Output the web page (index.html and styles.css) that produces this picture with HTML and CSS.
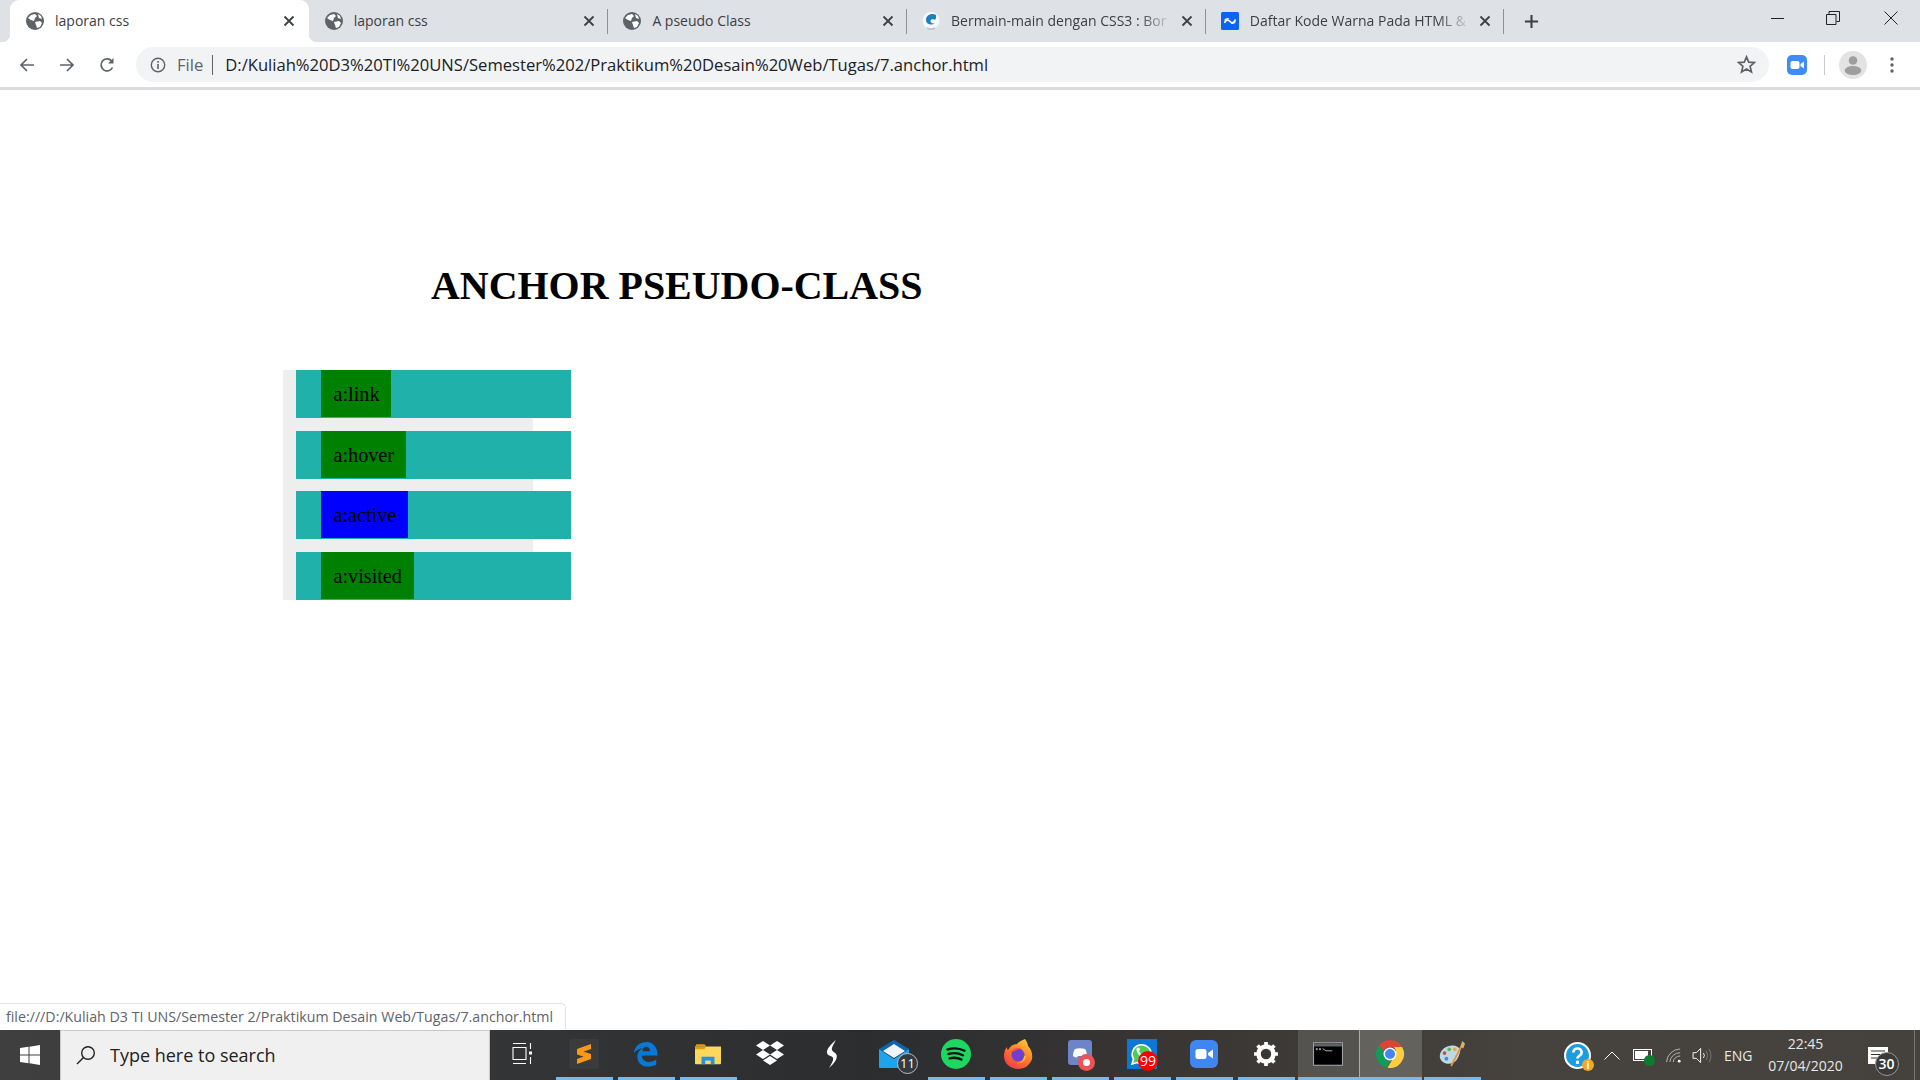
FILE: index.html
```html
<!DOCTYPE html>
<html lang="en">
<head>
<meta charset="utf-8">
<title>Anchor pseudo-class</title>
<link rel="stylesheet" href="styles.css">
</head>
<body>
<svg class="defs" width="0" height="0" aria-hidden="true">
  <defs>
    <linearGradient id="fox" x1="0.8" y1="0" x2="0.2" y2="1">
      <stop offset="0" stop-color="#ffc933"/>
      <stop offset="0.5" stop-color="#fb7c2a"/>
      <stop offset="1" stop-color="#f2384a"/>
    </linearGradient>
  </defs>
  <symbol id="globe" viewBox="0 0 18 18">
    <circle cx="9" cy="9" r="9" fill="#5f6368"/>
    <path d="M2 6l3-3 4-1 2 2-2 2-1 3-3-1zM9 10l5-1 2 2-2 4-3 1-1-3zM12 2l3 2 1 3-3-1z" fill="#fff"/>
  </symbol>
  <symbol id="cross" viewBox="0 0 12 12">
    <path d="M1.5 1.5l9 9M10.5 1.5l-9 9" stroke="#3c4043" stroke-width="1.8" fill="none"/>
  </symbol>
</svg>

<header class="tabstrip">
  <div class="tab tab-active">
    <svg class="favicon"><use href="#globe"/></svg>
    <span class="tab-title">laporan css</span>
    <svg class="tab-close"><use href="#cross"/></svg>
  </div>
  <div class="tab">
    <svg class="favicon"><use href="#globe"/></svg>
    <span class="tab-title">laporan css</span>
    <svg class="tab-close"><use href="#cross"/></svg>
    <i class="tab-sep"></i>
  </div>
  <div class="tab">
    <svg class="favicon"><use href="#globe"/></svg>
    <span class="tab-title">A pseudo Class</span>
    <svg class="tab-close"><use href="#cross"/></svg>
    <i class="tab-sep"></i>
  </div>
  <div class="tab">
    <svg class="favicon" viewBox="0 0 18 18">
      <circle cx="9" cy="8.500" r="8.500" fill="#f6f8fa"/>
      <path d="M14 3C9.500 .5 3.500 3.500 4 8.500c.4 3.500 5 5.500 9 3-2 .3-4.500-.3-4.500-2.500 0-1.800 2.500-2 3.800-1.300 1.200.4 2.200-1.500 1.700-4.700z" fill="#1c7fc0"/>
      <path d="M5 16c2.500 1.300 6 1.300 8 0" stroke="#b9c6d0" stroke-width="1.600" fill="none"/>
    </svg>
    <span class="tab-title tab-title-fade">Bermain-main dengan CSS3 : Bor</span>
    <svg class="tab-close"><use href="#cross"/></svg>
    <i class="tab-sep"></i>
  </div>
  <div class="tab">
    <svg class="favicon" viewBox="0 0 18 18">
      <rect width="18" height="18" rx="1.500" fill="#0d62f2"/>
      <path d="M3.500 11C5 7.500 7 7.500 9 9.500s4 1.500 5.500-2" stroke="#fff" stroke-width="1.700" fill="none"/>
      <path d="M3.500 8.500C5 6.500 6.500 6.300 8 7M10 11c1.500.8 3.200.3 4.500-1.500" stroke="#fff" stroke-width="1.200" fill="none"/>
    </svg>
    <span class="tab-title tab-title-fade">Daftar Kode Warna Pada HTML &amp;</span>
    <svg class="tab-close"><use href="#cross"/></svg>
    <i class="tab-sep"></i>
  </div>
  <svg class="newtab" viewBox="0 0 16 16"><path d="M8 1v14M1 8h14" stroke="#3c4043" stroke-width="2.200"/></svg>
  <div class="winctl">
    <svg class="winbtn" viewBox="0 0 14 14"><path d="M0 7.500h13" stroke="#222" stroke-width="1"/></svg>
    <svg class="winbtn" viewBox="0 0 14 14"><path d="M.5 3.500h9.500v10h-9.500zM3 3.500v-3h10.500v10h-3" stroke="#222" fill="none"/></svg>
    <svg class="winbtn winbtn-close" viewBox="0 0 14 14"><path d="M.5.500l13 13M13.500.500l-13 13" stroke="#222" fill="none"/></svg>
  </div>
</header>

<nav class="toolbar">
  <svg class="navicon" viewBox="0 0 16 16"><path d="M15 8H2M8 2L2 8l6 6" stroke="#5f6368" stroke-width="1.700" fill="none"/></svg>
  <svg class="navicon" viewBox="0 0 16 16"><path d="M1 8h13M8 2l6 6-6 6" stroke="#5f6368" stroke-width="1.700" fill="none"/></svg>
  <svg class="navicon" viewBox="0 0 16 16"><path d="M13.500 10.500A6 6 0 1 1 13 4.500" stroke="#5f6368" stroke-width="1.700" fill="none"/><path d="M14.500 1v5.500H9z" fill="#5f6368"/></svg>
  <div class="omnibox">
    <svg class="info" viewBox="0 0 16 16"><circle cx="8" cy="8" r="6.700" stroke="#5f6368" stroke-width="1.400" fill="none"/><path d="M7.200 7h1.600v5H7.200zM7.200 4h1.600v1.700H7.200z" fill="#5f6368"/></svg>
    <span class="scheme">File</span>
    <i class="omni-sep"></i>
    <span class="url">D:/Kuliah%20D3%20TI%20UNS/Semester%202/Praktikum%20Desain%20Web/Tugas/7.anchor.html</span>
    <svg class="star" viewBox="0 0 18 18"><path d="M9 1.800l2.100 5 5.400.4-4.100 3.500 1.300 5.300L9 13.200 4.300 16l1.300-5.300L1.500 7.200l5.400-.4z" stroke="#5f6368" stroke-width="1.600" fill="none"/></svg>
  </div>
  <svg class="ext-zoom" viewBox="0 0 20 20"><rect width="20" height="20" rx="5" fill="#3f8cf7"/><rect x="3.500" y="6" width="9" height="8" rx="2" fill="#fff"/><path d="M13.500 9l3.500-2.500v7L13.500 11z" fill="#fff"/></svg>
  <i class="tool-sep"></i>
  <svg class="avatar" viewBox="0 0 28 28"><circle cx="14" cy="14" r="14" fill="#e3e3e3"/><circle cx="14" cy="9.500" r="4.300" fill="#9e9e9e"/><ellipse cx="14" cy="19.500" rx="8.300" ry="4.500" fill="#9e9e9e"/></svg>
  <svg class="menu-dots" viewBox="0 0 4 16"><circle cx="2" cy="2" r="1.700" fill="#5f6368"/><circle cx="2" cy="8" r="1.700" fill="#5f6368"/><circle cx="2" cy="14" r="1.700" fill="#5f6368"/></svg>
</nav>

<main class="page">
  <h1 class="page-title">ANCHOR PSEUDO-CLASS</h1>
  <ul class="menu">
    <li class="menu-item"><a class="menu-link link-green">a:link</a></li>
    <li class="menu-item"><a class="menu-link link-green">a:hover</a></li>
    <li class="menu-item"><a class="menu-link link-blue">a:active</a></li>
    <li class="menu-item"><a class="menu-link link-green">a:visited</a></li>
  </ul>
  <div class="status">file:///D:/Kuliah D3 TI UNS/Semester 2/Praktikum Desain Web/Tugas/7.anchor.html</div>
</main>

<footer class="taskbar">
  <div class="start">
    <svg class="winlogo" viewBox="0 0 20 20"><path d="M0 3l8.500-1.200V9.500H0zM9.500 1.700L20 0v9.500H9.500zM0 10.500h8.500v7.700L0 17zM9.500 10.500H20V20L9.500 18.300z" fill="#fff"/></svg>
  </div>
  <div class="search">
    <svg class="search-icon" viewBox="0 0 20 20"><circle cx="12" cy="8" r="6.300" stroke="#222" stroke-width="1.400" fill="none"/><path d="M7.500 12.500L1 19" stroke="#222" stroke-width="1.500"/></svg>
    <span class="search-text">Type here to search</span>
  </div>
  <div class="apps">
    <div class="slot">
      <svg class="ico-md" viewBox="0 0 20 24"><path d="M1 1.500h13M1 5.500h13v12H1zM1 21.500h13M18.500 1v6M18.500 15v7" stroke="#fff" stroke-width="1.100" fill="none"/><rect x="17" y="9.500" width="3" height="3" fill="#fff"/></svg>
    </div>
    <div class="slot slot-open">
      <div class="sublime-bg">
        <svg class="ico-sm" viewBox="0 0 14 20"><path d="M14 0v5L0 10V5zM0 5.500l14 4.500v5L0 10.500zM14 10v5L0 20v-5z" fill="#fa9a14"/></svg>
      </div>
    </div>
    <div class="slot slot-open">
      <svg class="ico" viewBox="0 0 28 28"><path fill-rule="evenodd" d="M1 13C2 5 8 1 14.500 1 22 1 26.500 7 26.500 15.500H9.500C9.500 20 13 22.500 17 22.500c3 0 6-1 8-2.500v5.500c-2.500 1.200-5.500 2-9 2C8 27.500 4 21.500 4.800 15.500 5.200 12 8 8.500 11 7.500 7 8 3 10 1 13zM10 11h8.500c0-2.800-1.800-4.800-4-4.800-2.500 0-4.300 2-4.500 4.800z" fill="#0a78d7"/></svg>
    </div>
    <div class="slot slot-open">
      <svg class="ico" viewBox="0 0 28 24"><path d="M1 2.500a1 1 0 0 1 1-1h8l2 2h-11z" fill="#e0a100"/><path d="M0 4h28v18a1 1 0 0 1-1 1H1a1 1 0 0 1-1-1z" fill="#fbd75b"/><path d="M0 4h12l-2 3H0z" fill="#e0a100"/><path d="M7 23v-8h14v8h-4v-4h-6v4z" fill="#2a8fe0"/></svg>
    </div>
    <div class="slot">
      <svg class="ico-lg" viewBox="0 0 30 26"><path d="M8 0l7 4.500L8 9 1 4.500zM22 0l7 4.500L22 9l-7-4.500zM8 9l7 4.500L8 18l-7-4.500zM22 9l7 4.500L22 18l-7-4.500zM15 15l7 4.500-7 4.500-7-4.500z" fill="#fff"/></svg>
    </div>
    <div class="slot">
      <svg class="ico" viewBox="0 0 28 30"><path d="M18 0C13 5 7 10 9 15c1 2 5 2 6 4 1 3-2 7-4 11 5-5 9-9 8-14-.5-2-4-3-5-5-1-3 3-8 4-11z" fill="#fff"/></svg>
    </div>
    <div class="slot">
      <div class="badge-host">
        <svg class="ico-lg" viewBox="0 0 30 28"><path d="M0 9L15 0l15 9-15 9z" fill="#0f64b0"/><path d="M4 11l11-7 11 7-11 7z" fill="#eef4fa"/><path d="M0 9l15 10L30 9v18a1 1 0 0 1-1 1H1a1 1 0 0 1-1-1z" fill="#1fa3ec"/></svg>
        <span class="badge badge-mail">11</span>
      </div>
    </div>
    <div class="slot slot-open">
      <svg class="ico-sq" viewBox="0 0 30 30"><circle cx="15" cy="15" r="15" fill="#1ed760"/><path d="M6.500 10.500c6-1.800 12-1.300 17 1.300M7.500 15c5-1.400 10-1 14.500 1.300M8.500 19.300c4-1 8.500-.7 12 1.200" stroke="#111" stroke-width="2.400" stroke-linecap="round" fill="none"/></svg>
    </div>
    <div class="slot slot-open">
      <svg class="ico-sq" viewBox="0 0 30 30"><path d="M22 0c2 3 3 5 3 7 3 3 5 8 4 13-2 6-7 10-14 10S1 25 1 17c0-4 1-7 3-9 0 1 0 2 1 3 2-4 5-6 9-6 1-2 4-3 8-5z" fill="url(#fox)"/><circle cx="15" cy="16" r="6.500" fill="#6f3fd0"/><path d="M7 14c2-4 6-6 11-4.500-3 .5-7 3-11 4.500z" fill="#f2564a"/><path d="M21 17c0 4-3 7-7 7 4 1 9-2 9-7z" fill="#ffb233"/></svg>
    </div>
    <div class="slot slot-open">
      <div class="badge-host">
        <svg class="ico-lg" viewBox="0 0 30 28"><rect x="3" y="0" width="24" height="25" rx="3" fill="#6d84c8"/><path d="M8 16c0-3 1-6 2-7 3-1 7-1 10 0 1 1 2 4 2 7-1 1-3 1.500-4 1.500l-1-1.500h-4l-1 1.500c-1 0-3-.5-4-1.500z" fill="#fff"/></svg>
        <span class="badge badge-rec"><i class="rec-dot"></i></span>
      </div>
    </div>
    <div class="slot slot-open">
      <div class="badge-host">
        <svg class="ico-sq" viewBox="0 0 30 30"><rect width="30" height="30" fill="#0a78d4"/><path d="M5 25l1.500-5A9.500 9.500 0 1 1 10 23.500z" fill="#4ccb5a" stroke="#fff" stroke-width="1.600"/><path d="M9.500 9.500c2-2 3-1 3.500 1l-1 1.500c.8 1.800 2 3 3.500 3.700l1.300-1.200c2 .5 3 1.500 1 3.500-4 1.500-9-4.500-8.300-8.500z" fill="#fff"/></svg>
        <span class="badge badge-red">99</span>
      </div>
    </div>
    <div class="slot slot-open">
      <svg class="ico-lg" viewBox="0 0 28 28"><rect width="28" height="28" rx="6" fill="#4086f0"/><rect x="5.500" y="9" width="11" height="10" rx="2.500" fill="#fff"/><path d="M18 13l5-3.500v9L18 15z" fill="#fff"/></svg>
    </div>
    <div class="slot slot-open">
      <svg class="ico" viewBox="0 0 24 24"><circle cx="12" cy="12" r="7" stroke="#fff" stroke-width="4" fill="none"/><path d="M12 1v22M1 12h22M4.200 4.200l15.600 15.600M19.800 4.200L4.200 19.800" stroke="#fff" stroke-width="3.400"/><circle cx="12" cy="12" r="4.800" fill="#3a3634"/></svg>
    </div>
    <div class="slot slot-open slot-running">
      <svg class="ico-lg" viewBox="0 0 28 22"><rect width="28" height="22" fill="#9aa0a6"/><rect x="1" y="1" width="26" height="20" fill="#000"/><rect x="1" y="1" width="26" height="3" fill="#5f6368"/><path d="M3 6h1v1H3zM6 6h1v1H6zM9 6l3 2h6" stroke="#ccc" stroke-width=".8" fill="none"/></svg>
    </div>
    <div class="slot slot-open slot-focused">
      <svg class="ico-lg" viewBox="0 0 28 28"><path d="M14 0a14 14 0 0 1 12.100 7H14a7 7 0 0 0-6.500 4.500L3.300 5A14 14 0 0 1 14 0z" fill="#db4437"/><path d="M3.300 5l6.100 10.600A6 6 0 0 0 14 21l-3.500 6.600A14 14 0 0 1 3.300 5z" fill="#0f9d58"/><path d="M26.100 7a14 14 0 0 1-14.600 20.800L18 17a7 7 0 0 0 0-10z" fill="#ffcd40"/><circle cx="14" cy="14" r="6.500" fill="#fff"/><circle cx="14" cy="14" r="5" fill="#4285f4"/></svg>
    </div>
    <div class="slot slot-open">
      <svg class="ico-lg" viewBox="0 0 30 30"><path d="M2 16C3 9 11 5 17 6c6 1 8 5 6 9-2 5-3 8-8 10-6 2-14-2-13-9z" fill="#bcd9e8"/><circle cx="7" cy="14" r="2" fill="#d8443c"/><circle cx="12" cy="10" r="2" fill="#64b44c"/><circle cx="18" cy="10" r="2" fill="#f0a83c"/><circle cx="9" cy="20" r="2" fill="#3c8cd8"/><path d="M14 28L25 7" stroke="#e89434" stroke-width="2"/><path d="M24 7l2-6 3 3-2 5z" fill="#d8b070"/></svg>
    </div>
  </div>
  <div class="tray">
    <div class="badge-host tray-help">
      <svg class="tray-help-ico" viewBox="0 0 26 26"><circle cx="13" cy="13" r="12" fill="#1b9de2" stroke="#fff" stroke-width="2"/><path d="M9 10c0-5 8-5 8 0 0 3-4 3-4 6" stroke="#fff" stroke-width="2.600" fill="none"/><rect x="11.500" y="18" width="3" height="3" fill="#fff"/></svg>
      <span class="badge badge-info">i</span>
    </div>
    <svg class="tray-chevron" viewBox="0 0 16 9"><path d="M.500 8.500L8 1l7.500 7.500" stroke="#fff" fill="none"/></svg>
    <div class="badge-host tray-batt">
      <svg class="tray-batt-ico" viewBox="0 0 20 12"><rect x=".5" y=".5" width="18" height="11" stroke="#fff" fill="none"/><rect x="2" y="2" width="13" height="8" fill="#fff"/></svg>
      <span class="badge badge-leaf"></span>
    </div>
    <svg class="tray-wifi" viewBox="0 0 18 16"><path d="M.500 15A15 15 0 0 1 15 1M4 15A11 11 0 0 1 15 5M7.500 15A7.500 7.500 0 0 1 15 8.500" stroke="#bbb" fill="none"/><circle cx="14" cy="14" r="1.500" fill="#fff"/></svg>
    <svg class="tray-vol" viewBox="0 0 22 18"><path d="M1 6h3.500L9 1.500v15L4.500 12H1z" stroke="#fff" fill="none"/><path d="M12 6.500q2 2.500 0 5" stroke="#fff" fill="none"/><path d="M15 4q3 5 0 10M18 2q4 7 0 14" stroke="#777" fill="none"/></svg>
    <span class="tray-lang">ENG</span>
    <div class="clock"><span>22:45</span><span>07/04/2020</span></div>
    <div class="badge-host tray-notif">
      <svg class="tray-notif-ico" viewBox="0 0 20 17"><path d="M0 0h20v17H0z" fill="#fff"/><path d="M3 4h14M3 7.500h14M3 11h8" stroke="#333"/></svg>
      <span class="badge badge-notif">30</span>
    </div>
    <i class="show-desktop"></i>
  </div>
</footer>
</body>
</html>
```

FILE: styles.css
```css
* { box-sizing: border-box; }
html, body { height: 100%; }
body {
  margin: 0;
  display: flex;
  flex-direction: column;
  overflow: hidden;
  background: #fff;
  font-family: "Open Sans", "Noto Sans", sans-serif;
}
.defs { position: absolute; }
i { display: block; }
svg { display: block; flex: none; }

/* tab strip */
.tabstrip {
  height: 42px;
  flex: none;
  background: #dee1e6;
  display: flex;
  align-items: stretch;
  padding-left: 10px;
}
.tab {
  width: 298.7px;
  flex: none;
  display: flex;
  align-items: center;
  padding-left: 16px;
  color: #3c4043;
}
.tab-active {
  background: #fff;
  border-radius: 9px 9px 0 0;
  position: relative;
  padding-right: 1.5px;
}
.tab-active::before,
.tab-active::after {
  content: "";
  position: absolute;
  bottom: 0;
  width: 8px;
  height: 8px;
}
.tab-active::before { left: -8px; background: radial-gradient(circle at 0 0, transparent 8px, #fff 8.500px); }
.tab-active::after { right: -8px; background: radial-gradient(circle at 100% 0, transparent 8px, #fff 8.500px); }
.favicon { width: 18px; height: 18px; }
.tab-title {
  flex: 1;
  min-width: 0;
  margin-left: 11px;
  margin-right: 8px;
  padding-bottom: 2px;
  font-size: 14px;
  white-space: nowrap;
  overflow: hidden;
}
.tab-title-fade {
  -webkit-mask-image: linear-gradient(to right, #000 85%, transparent 100%);
  mask-image: linear-gradient(to right, #000 85%, transparent 100%);
}
.tab-close { width: 12px; height: 12px; margin-right: 12.200px; }
.tab-sep { width: 1px; height: 25px; background: #8f9296; margin-right: -1px; }
.newtab { width: 15px; height: 15px; margin: 14px 0 0 21px; }
.winctl {
  margin-left: auto;
  display: flex;
  align-items: flex-start;
  padding: 11px 22px 0 0;
  gap: 41px;
}
.winbtn { width: 14px; height: 14px; }
.winbtn-close { margin-left: 3px; }

/* toolbar */
.toolbar {
  height: 48px;
  flex: none;
  display: flex;
  align-items: center;
  padding: 0 21px 0 19px;
  background: #fff;
  border-bottom: 3px solid #dadce0;
}
.navicon { width: 16px; height: 16px; margin-right: 24px; }
.omnibox {
  margin-left: -3px;
  width: 1633px;
  height: 35px;
  flex: none;
  border-radius: 18px;
  background: #f1f3f4;
  display: flex;
  align-items: center;
  padding: 0 13px 0 14px;
  font-size: 16.600px;
  color: #202124;
}
.info { width: 16px; height: 16px; }
.scheme { margin-left: 11px; color: #5f6368; }
.omni-sep { width: 1px; height: 20px; background: #5f6368; margin: 0 12px 0 9px; }
.url { flex: 1; white-space: nowrap; }
.star { width: 19px; height: 19px; }
.ext-zoom { width: 20px; height: 20px; margin-left: 18px; }
.tool-sep { width: 1px; height: 20px; background: #ccc; margin-left: 17px; }
.avatar { width: 28px; height: 28px; margin-left: 14px; }
.menu-dots { width: 4px; height: 16px; margin-left: 23px; }

/* page */
.page {
  flex: 1;
  min-height: 0;
  position: relative;
  font-family: "Liberation Serif", serif;
  color: #000;
}
.page-title {
  margin: 173px 0 61px 431px;
  font-size: 39.950px;
  line-height: 46px;
  font-weight: bold;
}
.menu {
  margin: 0 0 0 283px;
  padding: 0 0 0 13px;
  width: 250px;
  list-style: none;
  background: #eee;
  display: flex;
  flex-direction: column;
  gap: 12.67px;
}
.menu-item {
  width: 275px;
  height: 48px;
  padding-left: 25px;
  background: #20b2aa;
  display: flex;
  align-items: flex-start;
}
.menu-link {
  height: 47px;
  padding: 13px 11.700px 0 12.500px;
  font-size: 20.200px;
  line-height: 23px;
}
.link-green { background: #008000; }
.link-blue { background: #0000ff; }
.status {
  position: absolute;
  left: 0;
  bottom: 0;
  height: 27px;
  padding: 0 12px 2px 6px;
  display: flex;
  align-items: center;
  background: #fff;
  border: 1px solid #e0e2e5;
  border-width: 1px 1px 0 0;
  border-radius: 0 5px 0 0;
  font-family: "Open Sans", "Noto Sans", sans-serif;
  font-size: 14.230px;
  color: #5f6368;
  white-space: nowrap;
}

/* taskbar */
.taskbar {
  height: 50px;
  flex: none;
  display: flex;
  align-items: stretch;
  color: #fff;
  background: linear-gradient(to right, #3f3f3f 0, #333537 25%, #2b2d2f 45%, #3a3634 62%, #46433e 80%, #45423e 100%);
}
.start { width: 60px; flex: none; display: flex; align-items: center; justify-content: center; }
.winlogo { width: 20px; height: 20px; }
.search {
  width: 430px;
  flex: none;
  display: flex;
  align-items: center;
  background: #f0f0f0;
  border: 1px solid #c8c8c8;
  border-bottom: 0;
  padding: 0 0 2px 15px;
  color: #222;
}
.search-icon { width: 20px; height: 20px; }
.search-text { margin-left: 14px; font-size: 18px; }
.apps { display: flex; flex: none; margin-left: 2px; }
.slot {
  width: 62px;
  flex: none;
  display: flex;
  align-items: center;
  justify-content: center;
  padding-right: 2px;
  border-bottom: 3px solid transparent;
}
.slot-open { border-image: linear-gradient(to right, transparent 5px, #76b9ed 5px, #76b9ed 56px, transparent 56px) 3; }
.slot-running { background: #55534f; border-image: linear-gradient(#76b9ed, #76b9ed) 3; border-right: 1px solid #333; }
.slot-focused { background: #64625d; border-image: linear-gradient(#76b9ed, #76b9ed) 3; }
.ico-sm { width: 14px; height: 20px; }
.ico-md { width: 20px; height: 24px; }
.ico { width: 26px; height: 28px; }
.ico-lg { width: 30px; height: 28px; }
.ico-sq { width: 30px; height: 30px; }
.sublime-bg {
  width: 30px;
  height: 30px;
  border-radius: 2px;
  background: #3b3b3b;
  display: flex;
  align-items: center;
  justify-content: center;
}
.badge-host { position: relative; display: flex; }
.badge {
  position: absolute;
  display: flex;
  align-items: center;
  justify-content: center;
  font-family: "Open Sans", "Noto Sans", sans-serif;
  border-radius: 50%;
  color: #fff;
}
.badge-mail {
  right: -9px;
  bottom: -6px;
  width: 21px;
  height: 21px;
  background: #333a40;
  border: 1px solid #bbb;
  font-size: 13px;
}
.badge-rec { right: 0; bottom: -3px; width: 17px; height: 17px; background: #ee5253; }
.rec-dot { width: 7px; height: 7px; border-radius: 50%; background: #fff; }
.badge-red { right: -1px; bottom: -2px; width: 20px; height: 20px; background: #f00; font-size: 14px; }

/* tray */
.tray {
  flex: 1;
  min-width: 0;
  display: flex;
  align-items: center;
  padding-left: 80px;
}
.tray-help-ico { width: 27px; height: 27px; }
.badge-info { right: -3px; bottom: -2px; width: 12px; height: 12px; background: #f5a623; font-size: 10px; font-weight: bold; }
.tray-chevron { width: 16px; height: 9px; margin-left: 13px; }
.tray-batt { margin-left: 13px; }
.tray-batt-ico { width: 20px; height: 12px; }
.badge-leaf { right: -2px; bottom: -5px; width: 11px; height: 11px; background: #0e7c2c; }
.tray-wifi { width: 17px; height: 15px; margin-left: 13px; }
.tray-vol { width: 21px; height: 17px; margin-left: 9px; }
.tray-lang { margin-left: 11px; font-size: 14px; color: #e8e8e8; }
.clock {
  width: 84px;
  margin-left: 11px;
  display: flex;
  flex-direction: column;
  align-items: center;
  gap: 4px;
  font-size: 14px;
  line-height: 18px;
  color: #e8e8e8;
}
.tray-notif { margin-left: 20px; }
.tray-notif-ico { width: 20px; height: 17px; }
.badge-notif { right: -11px; bottom: -12px; width: 24px; height: 24px; background: #3a3a38; border: 1px solid #999; font-size: 14px; font-weight: 600; }
.show-desktop { width: 1px; height: 50px; background: #77756f; margin-left: auto; margin-right: 5px; }
```
